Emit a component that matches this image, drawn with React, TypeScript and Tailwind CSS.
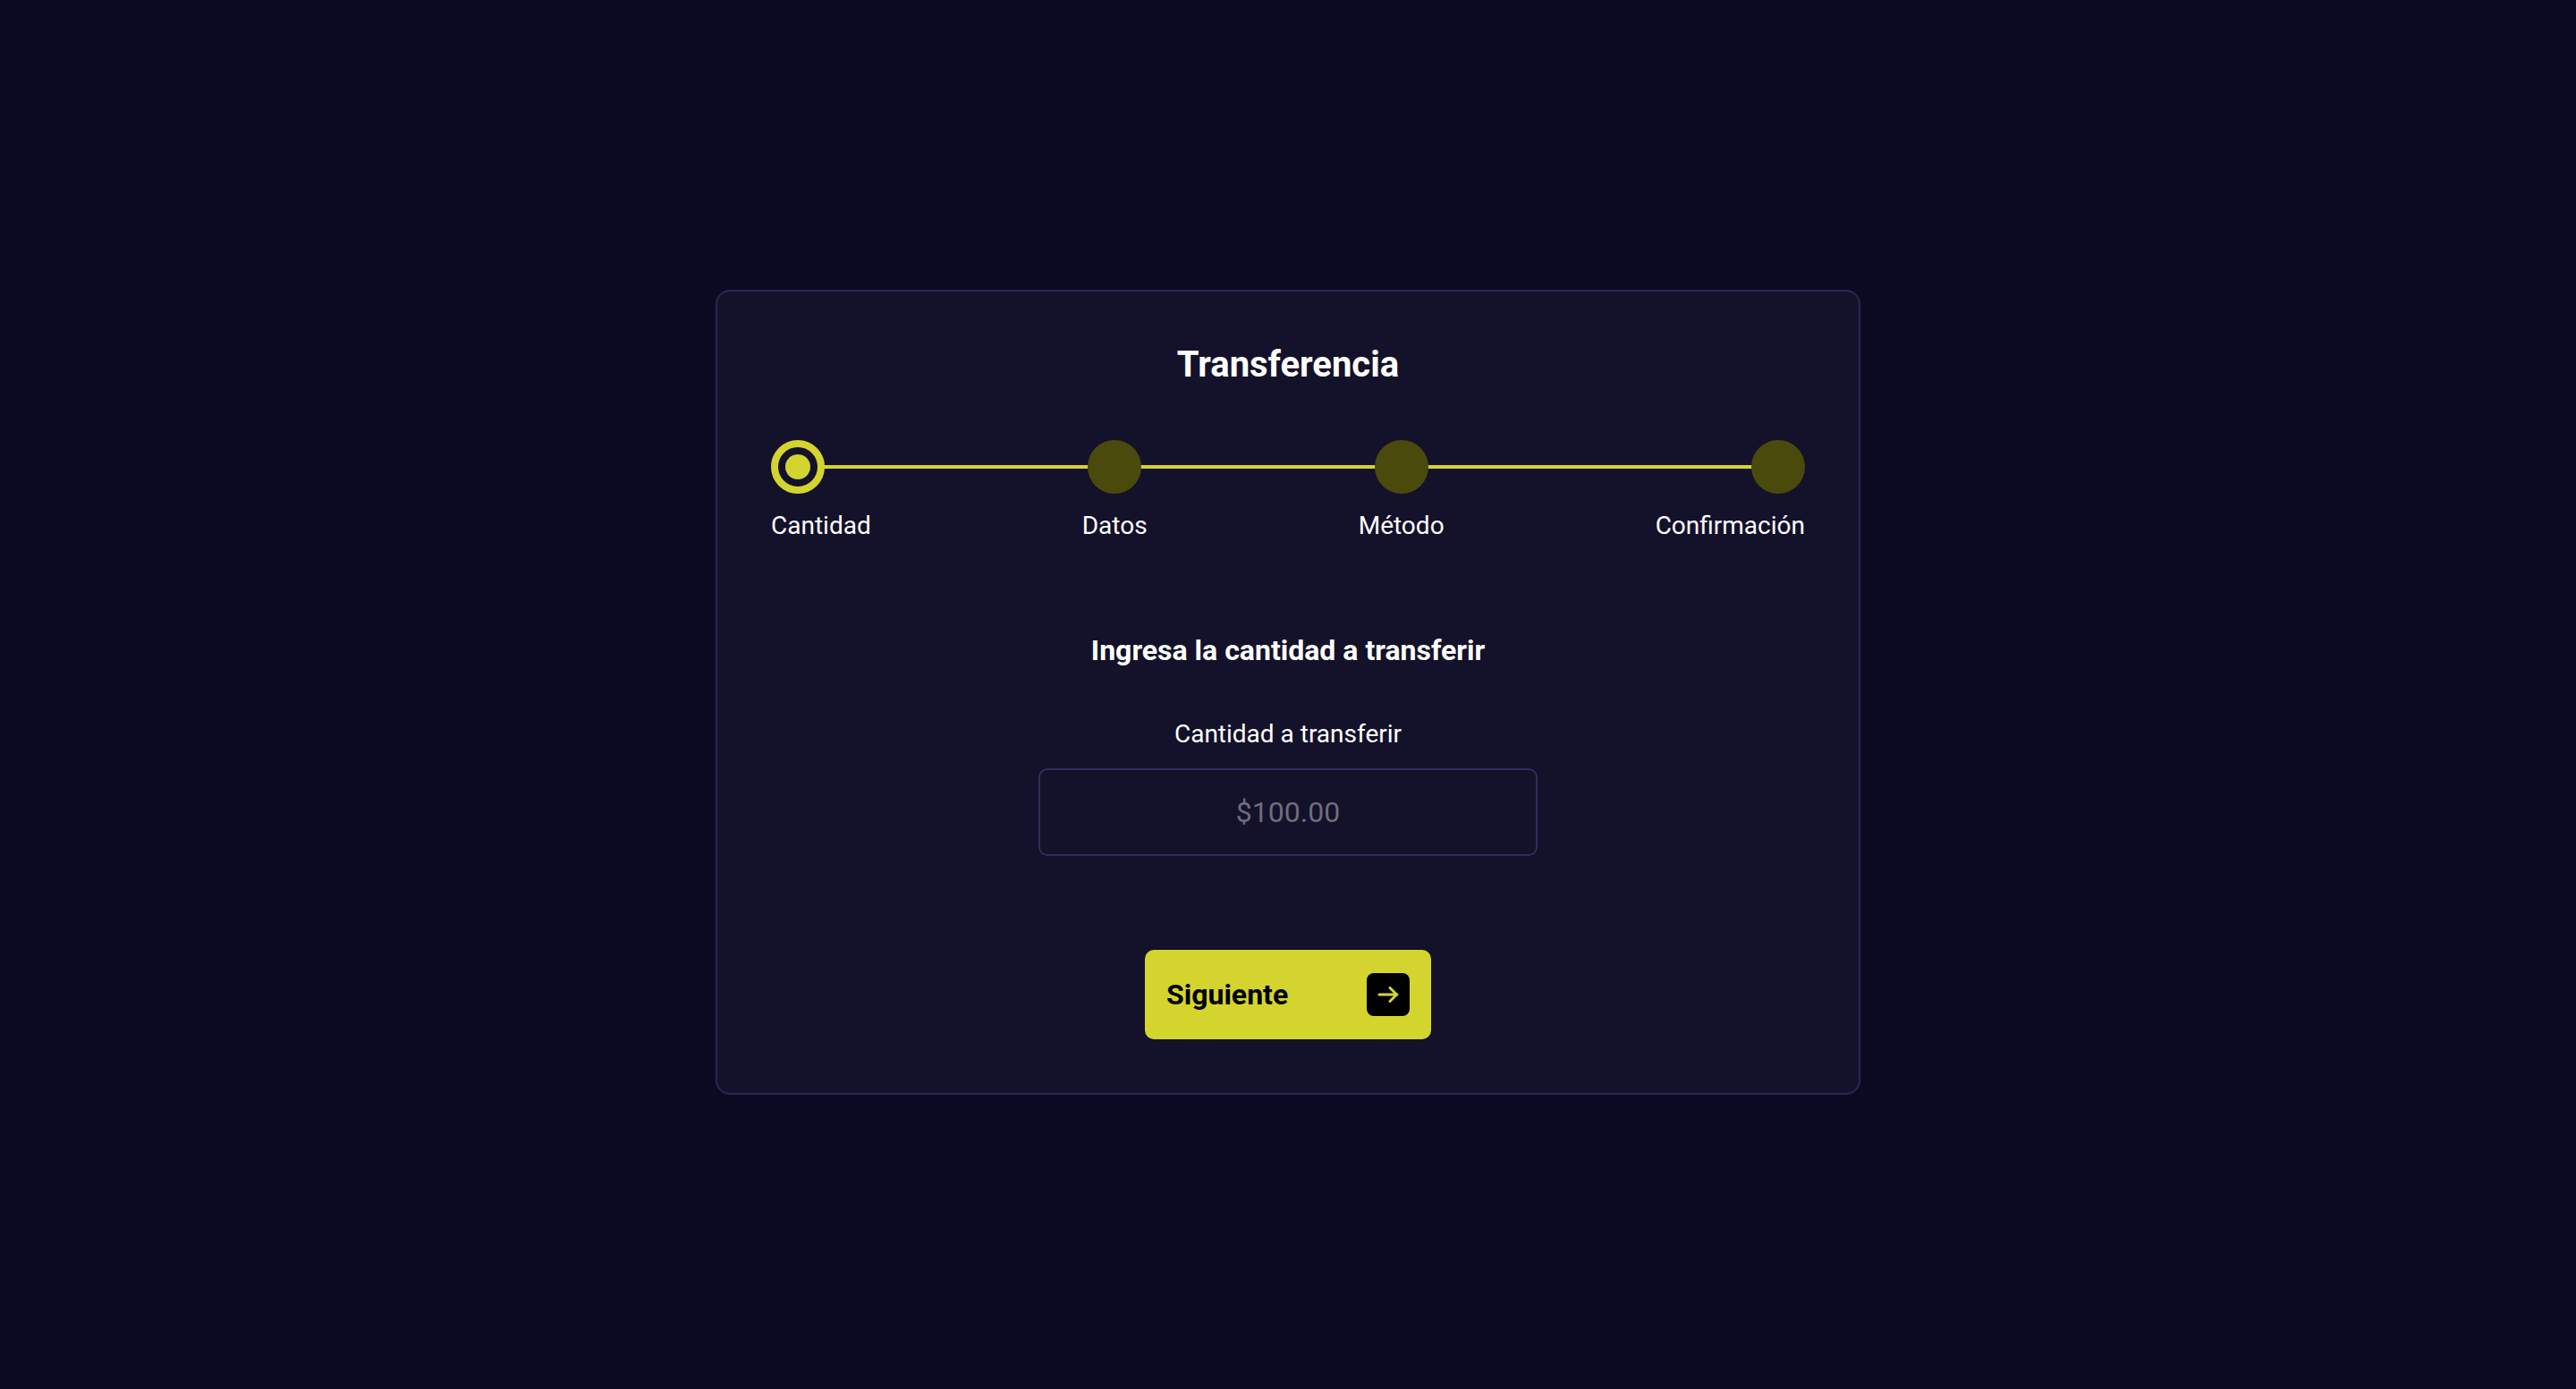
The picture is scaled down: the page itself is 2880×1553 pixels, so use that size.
import { useState } from "react";

const steps = ["Cantidad", "Datos", "Método", "Confirmación"];

export default function App() {
  const [amount, setAmount] = useState("");
  const current = 0;

  return (
    <div className="min-h-screen w-full bg-[#0c0a22] pb-[5px] flex items-center justify-center font-['Roboto',sans-serif]">
      <div className="w-[1280px] rounded-[16px] border-2 border-[#2c2652] bg-[#14112a] px-[60px] pt-[58px] pb-[60px] flex flex-col items-center">
        <h1 className="text-[40px] leading-[48px] font-bold text-white">Transferencia</h1>

        {/* stepper */}
        <div className="relative w-full mt-[60px] flex justify-between">
          <div className="absolute left-[30px] right-[30px] top-[28px] h-[4px] bg-[#d4d42e]" />
          {steps.map((s, i) => (
            <div
              key={s}
              className={
                "relative flex flex-col " +
                (i === 0 ? "items-start" : i === steps.length - 1 ? "items-end" : "items-center")
              }
            >
              {i === current ? (
                <div className="w-[60px] h-[60px] rounded-full border-[8px] border-[#d4d42e] bg-[#14112a] flex items-center justify-center">
                  <div className="w-[28px] h-[28px] rounded-full bg-[#d4d42e]" />
                </div>
              ) : (
                <div className="w-[60px] h-[60px] rounded-full bg-[#4a4a0c]" />
              )}
              <span className="mt-[18px] text-[28px] leading-[36px] text-white">{s}</span>
            </div>
          ))}
        </div>

        <h2 className="mt-[101px] text-[32px] leading-[40px] font-bold text-white">
          Ingresa la cantidad a transferir
        </h2>

        <label className="mt-[56px] text-[28px] leading-[36px] text-white">Cantidad a transferir</label>
        <input
          value={amount}
          onChange={(e) => setAmount(e.target.value)}
          placeholder="$100.00"
          className="mt-[20px] w-[558px] h-[98px] rounded-[10px] border-2 border-[#332c5e] bg-[#14112a] text-center text-[32px] text-white placeholder:text-[#6f6d7c] outline-none"
        />

        <button className="mt-[105px] w-[320px] h-[100px] rounded-[10px] bg-[#d4d42e] px-[24px] flex items-center justify-between">
          <span className="text-[32px] font-bold text-black">Siguiente</span>
          <span className="w-[48px] h-[48px] rounded-[8px] bg-black flex items-center justify-center">
            <svg width="24" height="18" viewBox="0 0 24 18" fill="none" stroke="#d4d42e" strokeWidth="3" strokeLinecap="round" strokeLinejoin="round">
              <path d="M2 9h20" />
              <path d="M14 1.5 21.5 9 14 16.5" />
            </svg>
          </span>
        </button>
      </div>
    </div>
  );
}
